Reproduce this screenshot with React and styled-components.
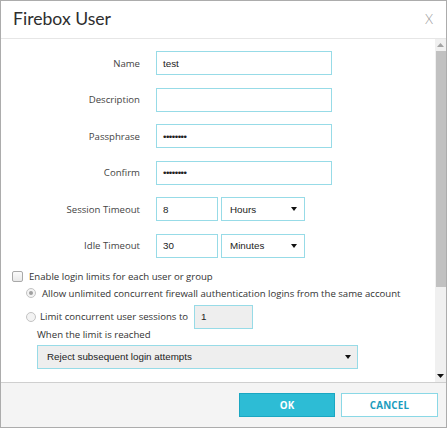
import React from "react";
import styled, { createGlobalStyle } from "styled-components";

const Global = createGlobalStyle`
  html, body { margin: 0; padding: 0; background: #fff; }
  * { box-sizing: border-box; }
`;

const Dialog = styled.div`
  width: 447px;
  height: 428px;
  border: 1px solid #acacac;
  display: flex;
  flex-direction: column;
  background: #fff;
  font-family: "Open Sans", "Liberation Sans", sans-serif;
  color: #333;
`;

const Header = styled.div`
  height: 38px;
  flex: none;
  border-bottom: 1px solid #e6e6e6;
  display: flex;
  align-items: center;
  justify-content: space-between;
  padding: 0 13px 2px 12px;
`;

const Title = styled.h1`
  margin: 0;
  font-family: "Lato", "Open Sans", sans-serif;
  font-weight: 400;
  font-size: 17.6px;
  color: #2e2e2e;
`;

const Close = styled.span`
  font-family: "Lato", sans-serif;
  font-weight: 300;
  font-size: 13px;
  color: #9a9a9a;
`;

const Middle = styled.div`
  height: 343px;
  flex: none;
  display: flex;
`;

const Body = styled.div`
  flex: 1;
  overflow: hidden;
  padding-top: 12px;
`;

const FormGrid = styled.div`
  display: grid;
  grid-template-columns: 139px auto;
  column-gap: 16px;
  row-gap: 12.6px;
  align-items: center;
`;

const Label = styled.label`
  text-align: right;
  font-size: 9.6px;
  color: #444;
`;

const Field = styled.div`
  display: flex;
  gap: 3px;
`;

const TextBox = styled.div`
  width: ${(p) => p.$w}px;
  height: 24px;
  border: 1px solid #97dbe7;
  background: ${(p) => (p.$gray ? "#eeeeee" : "#fff")};
  font-family: "Liberation Sans", Arial, sans-serif;
  font-size: 9.8px;
  color: #222;
  display: flex;
  align-items: center;
  padding-left: 6px;
  letter-spacing: ${(p) => (p.$dots ? "-0.5px" : "0")};
  margin-left: ${(p) => p.$ml || 0}px;
`;

const SelectBox = styled(TextBox)`
  justify-content: space-between;
  padding-left: 8px;
  padding-right: 7px;
`;

const Arrow = () => (
  <svg width="6" height="4" viewBox="0 0 6 4">
    <path d="M0 0 L6 0 L3 4 Z" fill="#111" />
  </svg>
);

const Options = styled.div`
  margin-top: 12px;
  padding-left: 11px;
  display: flex;
  flex-direction: column;
  font-size: 9.6px;
  color: #333;
`;

const CheckRow = styled.div`
  display: flex;
  align-items: center;
  gap: 6px;
  height: 14px;
`;

const CheckBox = styled.span`
  width: 11px;
  height: 11px;
  border: 1px solid #a9a9a9;
  border-radius: 2px;
  background: linear-gradient(#fbfbfb, #e9e9e9);
`;

const RadioRow = styled.div`
  display: flex;
  align-items: center;
  gap: ${(p) => p.$gap}px;
  margin-left: 14px;
  margin-top: ${(p) => p.$mt}px;
`;

const Radio = styled.span`
  width: 10px;
  height: 10px;
  border-radius: 50%;
  border: 1px solid #c3c3c3;
  background: #f3f3f3;
  display: flex;
  align-items: center;
  justify-content: center;
  &::after {
    content: "";
    display: ${(p) => (p.$on ? "block" : "none")};
    width: 4px;
    height: 4px;
    border-radius: 50%;
    background: #a0a0a0;
  }
`;

const Note = styled.div`
  margin-left: 25px;
  margin-top: -1px;
`;

const WideSelect = styled(SelectBox)`
  margin-left: 25px;
  margin-top: 4px;
  padding-left: 9px;
  padding-right: 6px;
`;

const ScrollBar = styled.div`
  width: 11px;
  flex: none;
  background: #f0f0f0;
  display: flex;
  flex-direction: column;
`;

const ScrollBtn = styled.div`
  height: 12px;
  display: flex;
  align-items: center;
  justify-content: center;
  background: #f0f0f0;
`;

const Thumb = styled.div`
  height: 236px;
  margin-left: 1px;
  background: #c1c1c1;
`;

const Track = styled.div`
  flex: 1;
`;

const Footer = styled.div`
  flex: 1;
  border-top: 1px solid #cfcfcf;
  background: #f4f4f4;
  display: flex;
  justify-content: flex-end;
  align-items: flex-start;
  gap: 6px;
  padding: 10px 8px 0 0;
`;

const Button = styled.button`
  width: ${(p) => p.$w}px;
  height: 24px;
  font-family: "Open Sans", sans-serif;
  font-weight: 700;
  font-size: 9.8px;
  letter-spacing: 0.2px;
  cursor: pointer;
  border: 1px solid ${(p) => (p.$primary ? "#1aa7c2" : "#8ad8e6")};
  background: ${(p) => (p.$primary ? "#2dbcd5" : "#fff")};
  color: ${(p) => (p.$primary ? "#fff" : "#1a9cbd")};
  padding: 0;
`;

const Dots = "••••••••";

export default function App() {
  return (
    <>
      <Global />
      <Dialog>
        <Header>
          <Title>Firebox User</Title>
          <Close>X</Close>
        </Header>
        <Middle>
          <Body>
            <FormGrid>
              <Label>Name</Label>
              <TextBox $w={176}>test</TextBox>
              <Label>Description</Label>
              <TextBox $w={176} />
              <Label>Passphrase</Label>
              <TextBox $w={176} $dots>{Dots}</TextBox>
              <Label>Confirm</Label>
              <TextBox $w={176} $dots>{Dots}</TextBox>
              <Label>Session Timeout</Label>
              <Field>
                <TextBox $w={62}>8</TextBox>
                <SelectBox $w={84}>
                  Hours <Arrow />
                </SelectBox>
              </Field>
              <Label>Idle Timeout</Label>
              <Field>
                <TextBox $w={62}>30</TextBox>
                <SelectBox $w={84}>
                  Minutes <Arrow />
                </SelectBox>
              </Field>
            </FormGrid>
            <Options>
              <CheckRow>
                <CheckBox />
                Enable login limits for each user or group
              </CheckRow>
              <RadioRow $gap={6} $mt={3}>
                <Radio $on />
                Allow unlimited concurrent firewall authentication logins from the same account
              </RadioRow>
              <RadioRow $gap={4} $mt={5}>
                <Radio />
                Limit concurrent user sessions to
                <TextBox $w={59} $gray $ml={2}>1</TextBox>
              </RadioRow>
              <Note>When the limit is reached</Note>
              <WideSelect $w={321} $gray>
                Reject subsequent login attempts <Arrow />
              </WideSelect>
            </Options>
          </Body>
          <ScrollBar>
            <ScrollBtn>
              <svg width="7" height="4" viewBox="0 0 7 4"><path d="M0 4 L7 4 L3.5 0 Z" fill="#a3a3a3" /></svg>
            </ScrollBtn>
            <Thumb />
            <Track />
            <ScrollBtn>
              <svg width="7" height="4" viewBox="0 0 7 4"><path d="M0 0 L7 0 L3.5 4 Z" fill="#111" /></svg>
            </ScrollBtn>
          </ScrollBar>
        </Middle>
        <Footer>
          <Button $w={96} $primary>OK</Button>
          <Button $w={97}>CANCEL</Button>
        </Footer>
      </Dialog>
    </>
  );
}
